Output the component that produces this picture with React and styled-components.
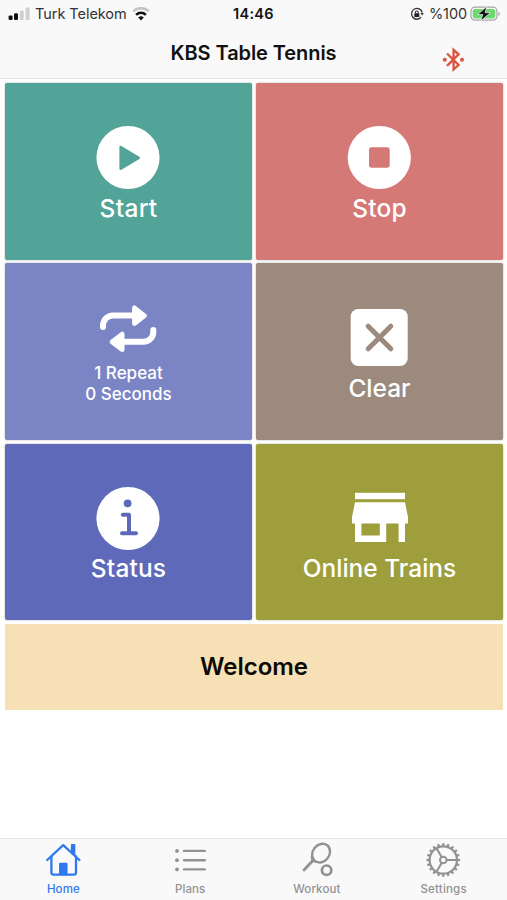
import React from 'react';
import { useState } from 'react';
import styled, { createGlobalStyle } from 'styled-components';

const GlobalStyle = createGlobalStyle`
    * {
        box-sizing: border-box;
    }

    body {
        margin: 0;
        background: #ffffff;
        font-family: 'Inter', 'Liberation Sans', sans-serif;
    }
`

const Screen = styled.div`
    display: flex;
    flex-direction: column;
    width: 507px;
    height: 900px;
    overflow: hidden;
`

const Header = styled.header`
    height: 79px;
    background: #f9f9f9;
    border-bottom: 1px solid #e6e6e6;
`

const StatusBar = styled.div`
    display: grid;
    grid-template-columns: 1fr auto 1fr;
    align-items: center;
    height: 27px;
    padding: 0 6px 0 8px;
    font-size: 14.5px;
    color: #333333;
`

const StatusGroup = styled.div`
    display: flex;
    align-items: center;
    justify-content: ${props => props.$end ? 'flex-end' : 'flex-start'};
    gap: ${props => props.$gap}px;
`

const Carrier = styled.span`
    letter-spacing: -0.05px;
`

const Clock = styled.span`
    margin-right: 2px;
    font-weight: 600;
    color: #111111;
    letter-spacing: 0.3px;
`

const Percent = styled.span`
    margin-left: 2px;
    letter-spacing: -0.1px;
`

const NavBar = styled.div`
    display: grid;
    grid-template-columns: 1fr auto 1fr;
    align-items: center;
    height: 51px;
`

const Title = styled.h1`
    grid-column: 2;
    margin: 0;
    font-size: 20px;
    font-weight: 600;
    letter-spacing: -0.08px;
    color: #111111;
`

const BluetoothButton = styled.button`
    justify-self: end;
    display: flex;
    margin: 14px 42px 0 0;
    padding: 0;
    border: none;
    background: none;
    cursor: pointer;
`

const Main = styled.main`
    flex: 1;
    padding: 4px 4px 0 5px;
`

const TileGrid = styled.div`
    display: grid;
    grid-template-columns: 1fr 1fr;
    grid-auto-rows: 176.7px;
    column-gap: 4px;
    row-gap: 3.6px;
`

const Tile = styled.button`
    display: flex;
    flex-direction: column;
    align-items: center;
    justify-content: center;
    padding: 1.4px 0 0;
    border: none;
    border-radius: 2px;
    background: ${props => props.$color};
    box-shadow: 0 0 2px rgba(0, 0, 0, 0.35);
    color: #ffffff;
    font-family: inherit;
    cursor: pointer;
`

const TileLabel = styled.span`
    margin: -2.5px 0 2.5px;
    font-size: 24.5px;
    font-weight: 500;
    line-height: 29px;
    letter-spacing: ${props => props.$spacing || 0}px;
`

const SmallLabel = styled.span`
    font-size: 17px;
    font-weight: 500;
    line-height: 21px;
`

const Banner = styled.div`
    display: flex;
    align-items: center;
    justify-content: center;
    height: 86px;
    margin-top: 3.4px;
    background: #f7e0b6;
    font-size: 24px;
    font-weight: 600;
    color: #0c0a06;
`

const TabBar = styled.nav`
    display: grid;
    grid-template-columns: repeat(4, 1fr);
    height: 62px;
    background: #f9f9f9;
    border-top: 1px solid #e6e6e6;
`

const Tab = styled.button`
    display: flex;
    flex-direction: column;
    align-items: center;
    gap: 4px;
    padding: 3px 0 0;
    border: none;
    background: none;
    color: ${props => props.$active ? '#2f78ee' : '#929292'};
    font-family: inherit;
    font-size: 11.5px;
    font-weight: 500;
    line-height: 14px;
    letter-spacing: ${props => props.$spacing || 0}px;
    cursor: pointer;
`

const SignalIcon = () => (
    <svg width="22" height="14" viewBox="0 0 22 14">
        <rect x="0.6" y="8.5" width="4" height="4.5" rx="1.2" fill="#111" />
        <rect x="6" y="6.2" width="4" height="6.8" rx="1.2" fill="#111" />
        <rect x="11.8" y="3.6" width="4" height="9.4" rx="1.2" fill="#d0d0d0" />
        <rect x="17.6" y="0.5" width="4" height="12.5" rx="1.2" fill="#d0d0d0" />
    </svg>
)

const WifiIcon = () => (
    <svg width="18" height="14" viewBox="0 0 18 14" fill="none" strokeWidth="2.5">
        <path d="M1.2 4.4a11 11 0 0 1 15.6 0" stroke="#c4c4c4" />
        <path d="M4.1 7.8a7 7 0 0 1 9.8 0" stroke="#111" />
        <path d="M9 13.5L6.2 10.6a4 4 0 0 1 5.6 0z" fill="#111" />
    </svg>
)

const LockIcon = () => (
    <svg width="14" height="14" viewBox="0 0 14 14" fill="none" stroke="#333">
        <path d="M11.2 10.2A5.4 5.4 0 1 1 12.2 5.5" strokeWidth="1.3" />
        <path d="M10.4 6h3.4l-1.7 2.6z" fill="#333" stroke="none" />
        <rect x="4.3" y="6.3" width="5" height="3.8" rx="0.6" fill="#222" stroke="none" />
        <path d="M5.4 6.5V5.4a1.4 1.4 0 0 1 2.8 0v1.1" strokeWidth="1.1" />
    </svg>
)

const BatteryIcon = () => (
    <svg width="31" height="16" viewBox="0 0 31 16">
        <rect x="1" y="1.2" width="26" height="13" rx="4" fill="#f9f9f9" stroke="#a5a5a5" strokeWidth="1.2" />
        <rect x="2.7" y="2.9" width="22.6" height="9.6" rx="2.4" fill="#6bd870" />
        <path d="M28.5 5.4c1.8 0.8 1.8 3.8 0 4.6z" fill="#a5a5a5" />
        <path d="M16.8 0.5L7.6 8.6h5.1l-1.9 6.4 9.6-8.4h-5.3z" fill="#111" stroke="#f9f9f9" strokeWidth="0.7" />
    </svg>
)

const BluetoothIcon = () => (
    <svg width="23" height="26" viewBox="0 0 23 26" fill="none" stroke="#dc5340" strokeWidth="2.3">
        <path d="M5 6.5L16.6 18L11.6 22.5V2.9L16.6 7.4L5 18.9" strokeLinejoin="miter" />
        <circle cx="2.8" cy="12.7" r="2" fill="#dc5340" stroke="none" />
        <circle cx="20" cy="12.7" r="2" fill="#dc5340" stroke="none" />
    </svg>
)

const PlayIcon = ({ color }) => (
    <svg width="77" height="77" viewBox="0 0 77 77">
        <circle cx="38" cy="38.5" r="31.6" fill="#fff" />
        <path d="M30.7 28v21.6l18-10.8z" fill={color} stroke={color} strokeWidth="2.6" strokeLinejoin="round" />
    </svg>
)

const StopIcon = ({ color }) => (
    <svg width="77" height="77" viewBox="0 0 77 77">
        <circle cx="38.3" cy="38.5" r="31.6" fill="#fff" />
        <rect x="28" y="28.2" width="20.7" height="20.5" rx="2.4" fill={color} />
    </svg>
)

const RepeatIcon = () => (
    <svg width="77" height="63" viewBox="0 0 77 63" fill="none" stroke="#fff" strokeLinecap="round" strokeLinejoin="round">
        <path d="M13 27v-1.5a10 10 0 0 1 10-10h20" strokeWidth="6" />
        <path d="M63.3 30v2a9.8 9.8 0 0 1-9.8 9.8H33" strokeWidth="6" />
        <path d="M44.4 7.8v15.8l10.2-7.9z" fill="#fff" strokeWidth="4.6" />
        <path d="M32.2 34v15.8L22 41.9z" fill="#fff" strokeWidth="4.6" />
    </svg>
)

const ClearIcon = ({ color }) => (
    <svg width="77" height="77" viewBox="0 0 77 77">
        <rect x="9.7" y="10" width="57" height="57" rx="7.5" fill="#fff" />
        <path d="M27.2 27.2l22.6 22.6M49.8 27.2L27.2 49.8" stroke={color} strokeWidth="5" strokeLinecap="round" />
    </svg>
)

const InfoIcon = ({ color }) => (
    <svg width="77" height="77" viewBox="0 0 77 77">
        <circle cx="38" cy="38.5" r="31.6" fill="#fff" />
        <circle cx="37.6" cy="23.3" r="3.9" fill={color} />
        <path d="M32.8 34.8H39v18.4M32 53.2h14" fill="none" stroke={color} strokeWidth="4" strokeLinecap="round" strokeLinejoin="round" />
    </svg>
)

const StoreIcon = () => (
    <svg width="77" height="77" viewBox="0 0 77 77" fill="#fff">
        <rect x="14" y="12.8" width="50" height="6.4" />
        <path fillRule="evenodd" d="M14 22.3h50l3 14.7v6.4h-3v18.7h-6.4V43.4H45.2v18.7H14V43.4h-3V37zM20.4 43.4v12.2h18.4V43.4z" />
    </svg>
)

const HomeIcon = () => (
    <svg width="36" height="36" viewBox="-1 0 36 36" fill="none" stroke="currentColor" strokeWidth="2.3" strokeLinecap="round" strokeLinejoin="round">
        <path d="M1.2 18L17.2 3.2L33.4 18" />
        <path d="M5.4 14.5V30.6a2 2 0 0 0 2 2H28a2 2 0 0 0 2-2V14.5" />
        <path d="M26 10.5V3.2h2.2v9.4" />
        <path d="M14.2 32V21.8h6.2V32z" fill="currentColor" />
    </svg>
)

const ListIcon = () => (
    <svg width="36" height="36" viewBox="0 0 36 36" stroke="currentColor" strokeWidth="2.4" strokeLinecap="round">
        <path d="M12 8.9h20.8M12 18.2h20.8M12 27.4h20.8" />
        <circle cx="5" cy="8.9" r="1.9" fill="currentColor" stroke="none" />
        <circle cx="5" cy="18.2" r="1.9" fill="currentColor" stroke="none" />
        <circle cx="5" cy="27.4" r="1.9" fill="currentColor" stroke="none" />
    </svg>
)

const RacketIcon = () => (
    <svg width="36" height="36" viewBox="0 0 36 36" fill="none" stroke="currentColor" strokeWidth="2.4" strokeLinecap="round">
        <ellipse cx="22.1" cy="11.1" rx="8.3" ry="9.9" transform="rotate(38 22.1 11.1)" />
        <path d="M14.4 18L5 28" strokeWidth="2.8" />
        <path d="M12.6 14.5L13.2 19.2L18.4 20.2" strokeWidth="1.8" />
        <circle cx="27.6" cy="28.2" r="4.7" strokeWidth="2.7" />
    </svg>
)

const teeth = Array.from({ length: 20 }, (_, i) => i * 18);

const GearIcon = () => (
    <svg width="36" height="36" viewBox="0.7 0 36 36" fill="none" stroke="currentColor">
        <circle cx="18" cy="18" r="13.7" strokeWidth="2.2" />
        {teeth.map(angle => (
            <path key={angle} d="M18 4.2V1.2" strokeWidth="2.3" transform={`rotate(${angle} 18 18)`} />
        ))}
        <circle cx="18" cy="18" r="3.3" strokeWidth="2" />
        <path d="M21.3 18H31.5M16.3 15.1L11.2 6.2M16.3 20.9L11.2 29.8" strokeWidth="2.1" />
    </svg>
)

const tiles = [
    { label: 'Start', color: '#52a398', Icon: PlayIcon, spacing: 0.3 },
    { label: 'Stop', color: '#d57976', Icon: StopIcon, spacing: 0.1 },
    { label: 'Repeat', color: '#7b85c5', Icon: RepeatIcon },
    { label: 'Clear', color: '#9c8a7f', Icon: ClearIcon },
    { label: 'Status', color: '#5f69b9', Icon: InfoIcon, spacing: 0.15 },
    { label: 'Online Trains', color: '#9e9e3c', Icon: StoreIcon },
];

const tabs = [
    { name: 'Home', Icon: HomeIcon, spacing: 0.1 },
    { name: 'Plans', Icon: ListIcon, spacing: 0.1 },
    { name: 'Workout', Icon: RacketIcon, spacing: 0.1 },
    { name: 'Settings', Icon: GearIcon, spacing: 0.2 },
];

const App = () => {
    const [activeTab, setActiveTab] = useState('Home');

    return (
        <Screen>
            <GlobalStyle />
            <Header>
                <StatusBar>
                    <StatusGroup $gap={5}>
                        <SignalIcon />
                        <Carrier>Turk Telekom</Carrier>
                        <WifiIcon />
                    </StatusGroup>
                    <Clock>14:46</Clock>
                    <StatusGroup $end $gap={3}>
                        <LockIcon />
                        <Percent>%100</Percent>
                        <BatteryIcon />
                    </StatusGroup>
                </StatusBar>
                <NavBar>
                    <Title>KBS Table Tennis</Title>
                    <BluetoothButton aria-label="Bluetooth">
                        <BluetoothIcon />
                    </BluetoothButton>
                </NavBar>
            </Header>
            <Main>
                <TileGrid>
                    {tiles.map(({ label, color, Icon, spacing }) => (
                        <Tile key={label} $color={color}>
                            <Icon color={color} />
                            {label === 'Repeat' ? (
                                <>
                                    <SmallLabel>1 Repeat</SmallLabel>
                                    <SmallLabel>0 Seconds</SmallLabel>
                                </>
                            ) : (
                                <TileLabel $spacing={spacing}>{label}</TileLabel>
                            )}
                        </Tile>
                    ))}
                </TileGrid>
                <Banner>Welcome</Banner>
            </Main>
            <TabBar>
                {tabs.map(({ name, Icon, spacing }) => (
                    <Tab key={name} $active={activeTab === name} $spacing={spacing} onClick={() => setActiveTab(name)}>
                        <Icon />
                        {name}
                    </Tab>
                ))}
            </TabBar>
        </Screen>
    );
}

export default App;
